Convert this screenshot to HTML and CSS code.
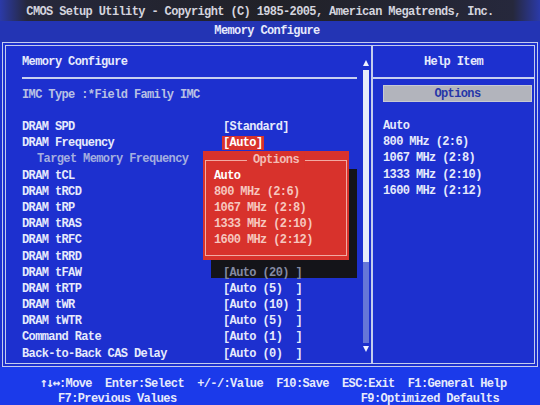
FILE: index.html
```html
<!DOCTYPE html>
<html lang="en">
<head>
    <meta charset="UTF-8">
    <title>Memory Configure</title>
    <link rel="stylesheet" href="styles.css">
</head>
<body>
<div class="screen">
    <div class="title">CMOS Setup Utility - Copyright (C) 1985-2005, American Megatrends, Inc.</div>
    <div class="subtitle">Memory Configure</div>

    <div class="frame">
        <div class="left">
            <div class="content">
                <div class="head">Memory Configure</div>
                <div class="info">IMC Type :*Field Family IMC</div>
                <ul class="items">
                    <li><span>DRAM SPD</span><span>[Standard]</span></li>
                    <li><span>DRAM Frequency</span><span><b class="active">[Auto]</b></span></li>
                    <li class="sub"><span>Target Memory Frequency</span><span></span></li>
                    <!-- values under the options box are not visible -->
                    <li><span>DRAM tCL</span><span></span></li>
                    <li><span>DRAM tRCD</span><span></span></li>
                    <li><span>DRAM tRP</span><span></span></li>
                    <li><span>DRAM tRAS</span><span></span></li>
                    <li><span>DRAM tRFC</span><span></span></li>
                    <li><span>DRAM tRRD</span><span></span></li>
                    <li class="shaded"><span>DRAM tFAW</span><span>[Auto (20) ]</span></li>
                    <li><span>DRAM tRTP</span><span>[Auto (5)  ]</span></li>
                    <li><span>DRAM tWR</span><span>[Auto (10) ]</span></li>
                    <li><span>DRAM tWTR</span><span>[Auto (5)  ]</span></li>
                    <li><span>Command Rate</span><span>[Auto (1)  ]</span></li>
                    <li><span>Back-to-Back CAS Delay</span><span>[Auto (0)  ]</span></li>
                </ul>
            </div>
            <div class="scroll">
                <span class="arrow up"></span>
                <div class="track"><div class="thumb"></div></div>
                <span class="arrow down"></span>
            </div>

            <div class="popup">
                <div class="popup-box">
                    <div class="popup-title">Options</div>
                    <ul>
                        <li class="sel">Auto</li>
                        <li>800 MHz (2:6)</li>
                        <li>1067 MHz (2:8)</li>
                        <li>1333 MHz (2:10)</li>
                        <li>1600 MHz (2:12)</li>
                    </ul>
                </div>
            </div>
        </div>

        <div class="right">
            <div class="head">Help Item</div>
            <div class="opt-bar">Options</div>
            <ul class="help">
                <li>Auto</li>
                <li>800 MHz (2:6)</li>
                <li>1067 MHz (2:8)</li>
                <li>1333 MHz (2:10)</li>
                <li>1600 MHz (2:12)</li>
            </ul>
        </div>
    </div>

    <div class="footer">
        <div class="keys"><span class="arr">&#8593;&#8595;&#8596;</span>:Move  Enter:Select  +/-/:Value  F10:Save  ESC:Exit  F1:General Help</div>
        <div class="keys2"><span>F7:Previous Values</span><span>F9:Optimized Defaults</span></div>
    </div>
</div>
</body>
</html>
```

FILE: styles.css
```css
 *{
     box-sizing: border-box;
 }
 body{
     margin: 0;
     background: #1a1a24;
 }
 ul{
     list-style: none;
     margin: 0;
     padding: 0;
 }
 .screen{
     width: 540px;
     height: 405px;
     overflow: hidden;
     background: #1d30cf;
     color: #e6eafc;
     font-family: "Liberation Mono", "DejaVu Sans Mono", monospace;
     font-weight: bold;
     font-size: 12px;
     letter-spacing: -0.62px;
     line-height: 16px;
     white-space: nowrap;
 }
 .title{
     height: 21px;
     padding-top: 4px;
     padding-right: 20px;
     text-align: center;
     color: #d4d4de;
     background: linear-gradient(90deg, #2b3aa8 0, #26283c 5%, #212127 50%, #26283c 95%, #2b3aa8 100%);
 }
 .subtitle{
     height: 21px;
     padding-top: 2px;
     padding-right: 6px;
     text-align: center;
     background: #2334b4;
 }
 .frame{
     display: flex;
     height: 325px;
     margin: 0 2px 0 2px;
     border: 4px double #c4ccee;
     background: #1d30cf;
 }
 .left{
     position: relative;
     display: grid;
     grid-template-columns: 335px 10px;
     column-gap: 4px;
     width: 367px;
     padding-left: 16px;
     border-right: 2px solid #c4ccee;
 }
 .head{
     padding-top: 8px;
     padding-bottom: 7px;
     border-bottom: 2px solid #c8d0f0;
 }
 .info{
     margin-top: 8px;
     color: #b8c0e4;
 }
 .items{
     margin-top: 16px;
 }
 .items li{
     display: grid;
     grid-template-columns: 201px 1fr;
     height: 16.2px;
     white-space: pre;
 }
 .items li.sub span:first-child{
     padding-left: 15px;
     color: #a4aee0;
 }
 .active{
     background: #d8322c;
     color: #fff;
     padding: 0 1px;
     margin-left: -1px;
 }
 .items li.shaded span:last-child{
     position: relative;
     z-index: 3;
     color: #848aa2;
 }
 .scroll{
     display: flex;
     flex-direction: column;
     align-items: center;
     padding-top: 14px;
     padding-bottom: 11px;
 }
 .arrow{
     width: 0;
     height: 0;
     border-left: 3px solid transparent;
     border-right: 3px solid transparent;
 }
 .arrow.up{
     border-bottom: 6px solid #f0f2ff;
 }
 .arrow.down{
     border-top: 6px solid #f0f2ff;
 }
 .track{
     flex: 1;
     width: 6px;
     margin: 4px 0 3px;
     background: #6676d8;
 }
 .thumb{
     height: 192px;
     background: #e8ecfa;
 }
 .popup{
     position: absolute;
     z-index: 2;
     left: 197px;
     top: 105px;
     width: 146px;
     height: 109px;
     padding: 9px 2px 4px 2px;
     background: #d8322c;
     box-shadow: 8px 18px 0 #141419;
 }
 .popup-box{
     position: relative;
     height: 100%;
     border: 1px solid #f2aaa2;
     padding: 7px 0 0 8px;
     color: #f6c6bf;
 }
 .popup-title{
     position: absolute;
     top: -9px;
     left: 50%;
     transform: translateX(-50%);
     padding: 0 6px;
     background: #d8322c;
     color: #f2bcb4;
 }
 .popup-box li{
     height: 16px;
 }
 .popup-box li.sel{
     color: #fff;
 }
 .right{
     flex: 1;
 }
 .right .head{
     text-align: center;
 }
 .opt-bar{
     margin: 6px 2px 0 10px;
     height: 17px;
     line-height: 16px;
     text-align: center;
     background: #b2b4bc;
     color: #2636a8;
     border: 1px solid #c8cad2;
 }
 .help{
     margin-top: 16px;
     padding-left: 10px;
 }
 .help li{
     height: 16.2px;
 }
 .footer{
     height: 39px;
     padding-top: 8px;
     background: #1b3aea;
 }
 .keys{
     padding-left: 40px;
     line-height: 15px;
     white-space: pre;
 }
 .arr{
     font-family: "DejaVu Sans Mono", monospace;
     font-size: 13px;
     letter-spacing: -1.5px;
 }
 .keys2{
     display: flex;
     justify-content: space-between;
     padding: 0 41px 0 58px;
     line-height: 14px;
 }
```
